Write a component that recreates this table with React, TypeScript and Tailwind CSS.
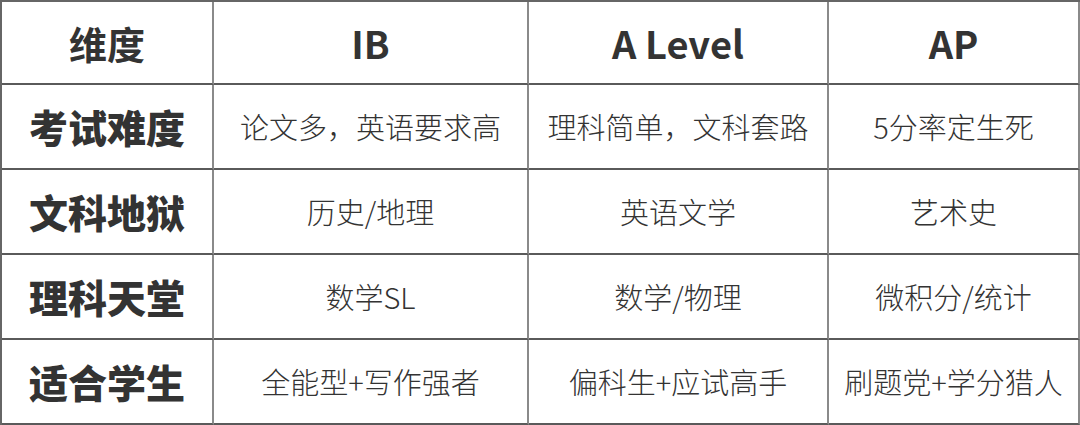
import React from "react";

const header = ["维度", "IB", "A Level", "AP"];
const rows: string[][] = [
  ["考试难度", "论文多，英语要求高", "理科简单，文科套路", "5分率定生死"],
  ["文科地狱", "历史/地理", "英语文学", "艺术史"],
  ["理科天堂", "数学SL", "数学/物理", "微积分/统计"],
  ["适合学生", "全能型+写作强者", "偏科生+应试高手", "刷题党+学分猎人"],
];

const font = { fontFamily: '"Noto Sans CJK SC", "Noto Sans", sans-serif' };

export default function App() {
  return (
    <div className="w-[1080px] h-[425px] bg-white overflow-hidden" style={font}>
      <div className="grid grid-cols-[212px_315px_300px_1fr] grid-rows-[83px_85px_85px_85px_85px] w-[1080px] h-[425px] border-l-2 border-t-2 border-[#666]">
        {header.map((h, i) => (
          <div
            key={"h" + i}
            className="flex items-center justify-center border-r-2 border-b-2 border-r-[#8a8a8a] border-b-[#5a5a5a] text-[38px] font-bold text-[#333] leading-none"
          >
            {h}
          </div>
        ))}
        {rows.map((r, ri) =>
          r.map((c, ci) => (
            <div
              key={ri + "-" + ci}
              className={
                ci === 0
                  ? "flex items-center justify-center border-r-2 border-b-2 border-r-[#8a8a8a] border-b-[#5a5a5a] text-[39px] font-black text-[#333] leading-none"
                  : "flex items-center justify-center border-r-2 border-b-2 border-r-[#8a8a8a] border-b-[#5a5a5a] text-[29px] font-light text-[#333] leading-none whitespace-nowrap"
              }
            >
              {c}
            </div>
          ))
        )}
      </div>
    </div>
  );
}
